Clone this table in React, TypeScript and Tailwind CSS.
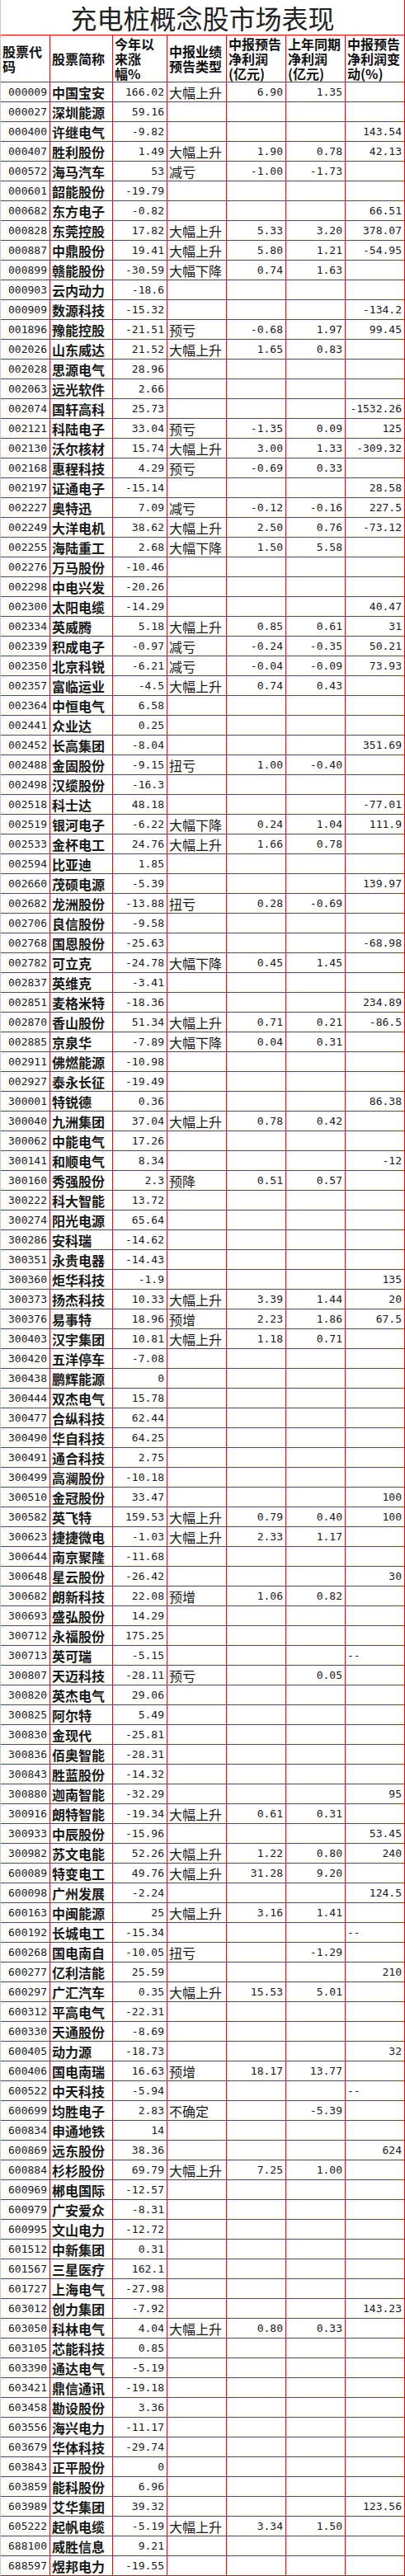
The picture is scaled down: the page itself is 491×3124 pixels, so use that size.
import React from "react";

const raw = `000009,中国宝安,166.02,大幅上升,6.90,1.35,
000027,深圳能源,59.16,,,,
000400,许继电气,-9.82,,,,143.54
000407,胜利股份,1.49,大幅上升,1.90,0.78,42.13
000572,海马汽车,53,减亏,-1.00,-1.73,
000601,韶能股份,-19.79,,,,
000682,东方电子,-0.82,,,,66.51
000828,东莞控股,17.82,大幅上升,5.33,3.20,378.07
000887,中鼎股份,19.41,大幅上升,5.80,1.21,-54.95
000899,赣能股份,-30.59,大幅下降,0.74,1.63,
000903,云内动力,-18.6,,,,
000909,数源科技,-15.32,,,,-134.2
001896,豫能控股,-21.51,预亏,-0.68,1.97,99.45
002026,山东威达,21.52,大幅上升,1.65,0.83,
002028,思源电气,28.96,,,,
002063,远光软件,2.66,,,,
002074,国轩高科,25.73,,,,-1532.26
002121,科陆电子,33.04,预亏,-1.35,0.09,125
002130,沃尔核材,15.74,大幅上升,3.00,1.33,-309.32
002168,惠程科技,4.29,预亏,-0.69,0.33,
002197,证通电子,-15.14,,,,28.58
002227,奥特迅,7.09,减亏,-0.12,-0.16,227.5
002249,大洋电机,38.62,大幅上升,2.50,0.76,-73.12
002255,海陆重工,2.68,大幅下降,1.50,5.58,
002276,万马股份,-10.46,,,,
002298,中电兴发,-20.26,,,,
002300,太阳电缆,-14.29,,,,40.47
002334,英威腾,5.18,大幅上升,0.85,0.61,31
002339,积成电子,-0.97,减亏,-0.24,-0.35,50.21
002350,北京科锐,-6.21,减亏,-0.04,-0.09,73.93
002357,富临运业,-4.5,大幅上升,0.74,0.43,
002364,中恒电气,6.58,,,,
002441,众业达,0.25,,,,
002452,长高集团,-8.04,,,,351.69
002488,金固股份,-9.15,扭亏,1.00,-0.40,
002498,汉缆股份,-16.3,,,,
002518,科士达,48.18,,,,-77.01
002519,银河电子,-6.22,大幅下降,0.24,1.04,111.9
002533,金杯电工,24.76,大幅上升,1.66,0.78,
002594,比亚迪,1.85,,,,
002660,茂硕电源,-5.39,,,,139.97
002682,龙洲股份,-13.88,扭亏,0.28,-0.69,
002706,良信股份,-9.58,,,,
002768,国恩股份,-25.63,,,,-68.98
002782,可立克,-24.78,大幅下降,0.45,1.45,
002837,英维克,-3.41,,,,
002851,麦格米特,-18.36,,,,234.89
002870,香山股份,51.34,大幅上升,0.71,0.21,-86.5
002885,京泉华,-7.89,大幅下降,0.04,0.31,
002911,佛燃能源,-10.98,,,,
002927,泰永长征,-19.49,,,,
300001,特锐德,0.36,,,,86.38
300040,九洲集团,37.04,大幅上升,0.78,0.42,
300062,中能电气,17.26,,,,
300141,和顺电气,8.34,,,,-12
300160,秀强股份,2.3,预降,0.51,0.57,
300222,科大智能,13.72,,,,
300274,阳光电源,65.64,,,,
300286,安科瑞,-14.62,,,,
300351,永贵电器,-14.43,,,,
300360,炬华科技,-1.9,,,,135
300373,扬杰科技,10.33,大幅上升,3.39,1.44,20
300376,易事特,18.96,预增,2.23,1.86,67.5
300403,汉宇集团,10.81,大幅上升,1.18,0.71,
300420,五洋停车,-7.08,,,,
300438,鹏辉能源,0,,,,
300444,双杰电气,15.78,,,,
300477,合纵科技,62.44,,,,
300490,华自科技,64.25,,,,
300491,通合科技,2.75,,,,
300499,高澜股份,-10.18,,,,
300510,金冠股份,33.47,,,,100
300582,英飞特,159.53,大幅上升,0.79,0.40,100
300623,捷捷微电,-1.03,大幅上升,2.33,1.17,
300644,南京聚隆,-11.68,,,,
300648,星云股份,-26.42,,,,30
300682,朗新科技,22.08,预增,1.06,0.82,
300693,盛弘股份,14.29,,,,
300712,永福股份,175.25,,,,
300713,英可瑞,-5.15,,,,--
300807,天迈科技,-28.11,预亏,,0.05,
300820,英杰电气,29.06,,,,
300825,阿尔特,5.49,,,,
300830,金现代,-25.81,,,,
300836,佰奥智能,-28.31,,,,
300843,胜蓝股份,-14.32,,,,
300880,迦南智能,-32.29,,,,95
300916,朗特智能,-19.34,大幅上升,0.61,0.31,
300933,中辰股份,-15.96,,,,53.45
300982,苏文电能,52.26,大幅上升,1.22,0.80,240
600089,特变电工,49.76,大幅上升,31.28,9.20,
600098,广州发展,-2.24,,,,124.5
600163,中闽能源,25,大幅上升,3.16,1.41,
600192,长城电工,-15.34,,,,--
600268,国电南自,-10.05,扭亏,,-1.29,
600277,亿利洁能,25.59,,,,210
600297,广汇汽车,0.35,大幅上升,15.53,5.01,
600312,平高电气,-22.31,,,,
600330,天通股份,-8.69,,,,
600405,动力源,-18.73,,,,32
600406,国电南瑞,16.63,预增,18.17,13.77,
600522,中天科技,-5.94,,,,--
600699,均胜电子,2.83,不确定,,-5.39,
600834,申通地铁,14,,,,
600869,远东股份,38.36,,,,624
600884,杉杉股份,69.79,大幅上升,7.25,1.00,
600969,郴电国际,-12.57,,,,
600979,广安爱众,-8.31,,,,
600995,文山电力,-12.72,,,,
601512,中新集团,0.31,,,,
601567,三星医疗,162.1,,,,
601727,上海电气,-27.98,,,,
603012,创力集团,-7.92,,,,143.23
603050,科林电气,4.04,大幅上升,0.80,0.33,
603105,芯能科技,0.85,,,,
603390,通达电气,-5.19,,,,
603421,鼎信通讯,-19.18,,,,
603458,勘设股份,3.36,,,,
603556,海兴电力,-11.17,,,,
603679,华体科技,-29.74,,,,
603843,正平股份,0,,,,
603859,能科股份,6.96,,,,
603989,艾华集团,39.32,,,,123.56
605222,起帆电缆,-5.19,大幅上升,3.34,1.50,
688100,威胜信息,9.21,,,,
688597,煜邦电力,-19.55,,,,`;

const rows = raw.split("\n").map((line) => line.split(","));

const headers = [
  ["股票代", "码"],
  ["股票简称"],
  ["今年以", "来涨幅%"],
  ["中报业绩", "预告类型"],
  ["中报预告", "净利润", "(亿元)"],
  ["上年同期", "净利润", "(亿元)"],
  ["中报预告", "净利润变", "动(%)"],
];

const cjk = "font-['Noto_Sans_CJK_SC',sans-serif]";
const mono = "font-['DejaVu_Sans_Mono',monospace]";
const cell = "flex items-center h-6 border-r border-b border-[#ff0000] overflow-hidden whitespace-nowrap text-[#1a1a1a]";

const NumCell = ({ v }: { v: string }) => (
  <div className={`${cell} ${mono} text-[13px] justify-end pr-[3px]`}>{v}</div>
);

export default function App() {
  return (
    <div className="w-[491px] bg-white border-l border-[#c8c8c8]">
      <div className="grid grid-cols-[60px_76px_66px_72px_72px_72px_72px]">
        {/* title */}
        <div
          className={`col-span-7 h-[43px] flex items-center justify-center border-r border-b border-[#ff0000] ${cjk} text-[32px] leading-none text-[#222]`}
        >
          充电桩概念股市场表现
        </div>

        {/* header */}
        {headers.map((lines, i) => (
          <div
            key={i}
            className={`h-[57px] flex flex-col justify-center pl-[2px] border-r border-b border-[#ff0000] ${cjk} text-[16px] leading-[18px] font-bold text-[#111]`}
          >
            {lines.map((l) => (
              <span key={l}>{l}</span>
            ))}
          </div>
        ))}

        {/* data */}
        {rows.map(([code, name, ytd, type, f1, f2, f3]) => (
          <React.Fragment key={code}>
            <NumCell v={code} />
            <div className={`${cell} ${cjk} text-[16px] font-bold pl-[2px] text-[#000]`}>{name}</div>
            <NumCell v={ytd} />
            <div className={`${cell} ${cjk} text-[16px] pl-[2px]`}>{type}</div>
            <NumCell v={f1} />
            <NumCell v={f2} />
            {f3 === "--" ? (
              <div className={`${cell} ${mono} text-[13px] pl-[2px]`}>{f3}</div>
            ) : (
              <NumCell v={f3} />
            )}
          </React.Fragment>
        ))}
      </div>
    </div>
  );
}
